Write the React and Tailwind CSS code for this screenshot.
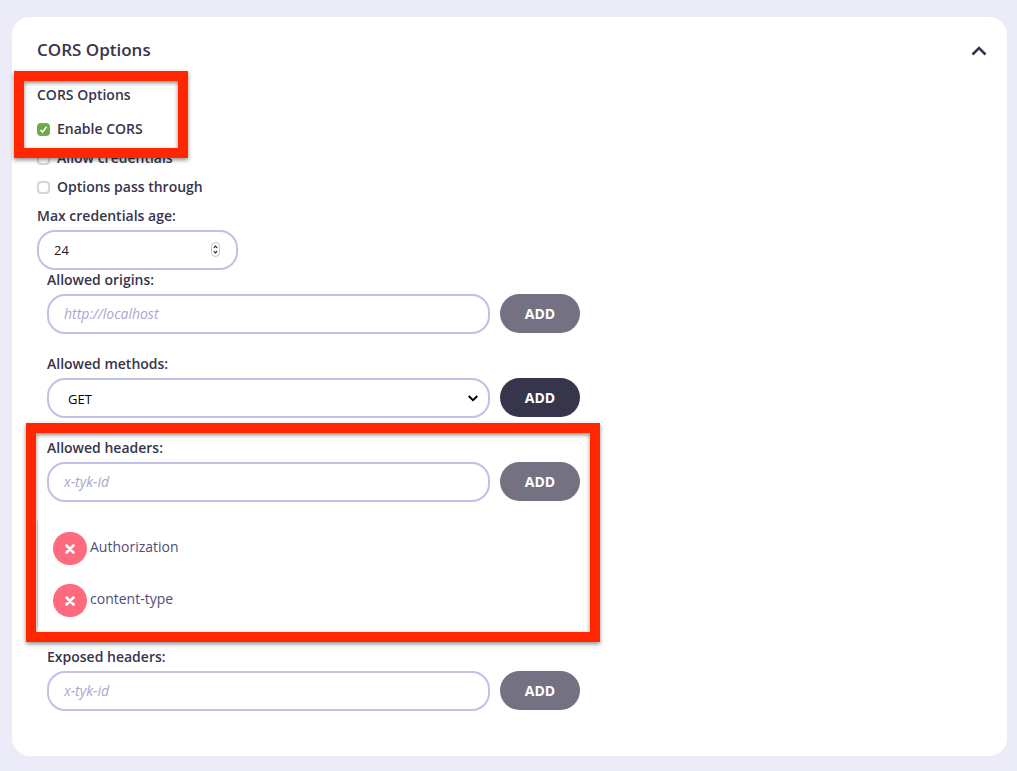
import React, { useState } from "react";

function Highlight({ className }) {
  return (
    <div
      aria-hidden="true"
      className={`pointer-events-none absolute z-10 border-10 border-[#ff2600] [filter:drop-shadow(0_2px_2px_rgba(0,0,0,0.45))] ${className}`}
    />
  );
}

function CheckRow({ id, label, defaultChecked }) {
  return (
    <div className="flex h-5 items-center gap-[7px]">
      <span className="relative flex h-[13px] w-[13px]">
        <input
          id={id}
          type="checkbox"
          defaultChecked={defaultChecked}
          className="peer h-[13px] w-[13px] appearance-none rounded-[4px] border-2 border-[#d6d6d6] bg-white checked:border-[#6fae48] checked:bg-[#6aaa43]"
        />
        <svg
          viewBox="0 0 13 13"
          className="pointer-events-none absolute inset-0 hidden h-[13px] w-[13px] peer-checked:block"
          fill="none"
          stroke="#fff"
          strokeWidth="1.6"
        >
          <path d="M3.4 7 5.6 9.1 9.6 3.8" />
        </svg>
      </span>
      <label htmlFor={id} className="font-semibold">
        {label}
      </label>
    </div>
  );
}

const fieldClass =
  "h-10 w-full rounded-[18px] border-2 border-[#c3c0e6] bg-white text-[13px] outline-none";

function Field({ id, label, active, children }) {
  return (
    <div className="px-[10px]">
      <label htmlFor={id} className="mb-1 block h-5 font-semibold">
        {label}
      </label>
      <div className="flex max-w-[533px] gap-[10px]">
        <div className="relative min-w-0 flex-1">{children}</div>
        <button
          type="button"
          className={`h-[39px] w-20 shrink-0 rounded-[20px] text-sm font-bold text-white ${
            active ? "bg-[#36354b]" : "bg-[#737182]"
          }`}
        >
          ADD
        </button>
      </div>
    </div>
  );
}

function TextField({ id, label, placeholder }) {
  return (
    <Field id={id} label={label}>
      <input
        id={id}
        type="text"
        placeholder={placeholder}
        className={`${fieldClass} px-[15px] placeholder:text-sm placeholder:text-[#aaa7d0] placeholder:italic`}
      />
    </Field>
  );
}

export default function App() {
  const [open, setOpen] = useState(true);
  const [age, setAge] = useState(24);
  const [headers, setHeaders] = useState(["Authorization", "content-type"]);

  return (
    <main className="min-h-screen bg-[#ecebf8] pt-[17px] pr-[10px] pb-[15px] pl-3 font-['Open_Sans','Noto_Sans',sans-serif] text-sm leading-5 text-[#36354b]">
      <section className="rounded-[18px] bg-white px-[25px] pt-5 pb-[45px]">
        <header className="flex h-[26px] items-center justify-between">
          <h2 className="text-[17px] leading-6 font-semibold">CORS Options</h2>
          <button
            type="button"
            aria-label="Toggle CORS options"
            aria-expanded={open}
            onClick={() => setOpen(!open)}
            className="-mr-[9px] flex h-6 w-6 items-center justify-center pt-0.5"
          >
            <svg viewBox="0 0 16 10" className="h-[10px] w-4" fill="none" stroke="#36354b" strokeWidth="2.6">
              <path d="M1.5 8.5 8 2l6.5 6.5" />
            </svg>
          </button>
        </header>

        {open && (
          <div className="pt-[22px]">
            <div className="relative mb-[9px] flex flex-col gap-[14px]">
              <h3 className="font-semibold">CORS Options</h3>
              <CheckRow id="enable-cors" label="Enable CORS" defaultChecked />
              <Highlight className="-top-[14px] -left-[23px] h-[87px] w-[174px]" />
            </div>
            <div className="flex flex-col gap-[9px]">
              <CheckRow id="allow-credentials" label="Allow credentials" />
              <CheckRow id="options-pass" label="Options pass through" />
              <div>
                <label htmlFor="max-age" className="mb-1 block h-5 font-semibold">
                  Max credentials age:
                </label>
                <div className="relative max-w-[201px]">
                  <input
                    id="max-age"
                    type="number"
                    value={age}
                    onChange={(e) => setAge(e.target.value)}
                    className={`${fieldClass} [appearance:textfield] pr-8 pl-[15px] text-[#222] [&::-webkit-inner-spin-button]:appearance-none`}
                  />
                  <svg
                    viewBox="0 0 9 15"
                    className="pointer-events-none absolute top-3 right-[18px] h-[15px] w-[9px]"
                    fill="none"
                  >
                    <rect x=".5" y=".5" width="8" height="14" rx="4" fill="#fff" stroke="#c4c4c4" />
                    <path d="M2.8 5.8 4.5 4l1.7 1.8M2.8 9.2 4.5 11l1.7-1.8" stroke="#222" strokeWidth="1.2" />
                  </svg>
                </div>
              </div>
            </div>

            <div className="flex flex-col gap-5">
              <TextField id="origins" label="Allowed origins:" placeholder="http://localhost" />

              <Field id="methods" label="Allowed methods:" active>
                <select id="methods" className={`${fieldClass} appearance-none px-[19px] pt-px text-black`}>
                  <option>GET</option>
                  <option>POST</option>
                  <option>PUT</option>
                  <option>DELETE</option>
                </select>
                <svg
                  viewBox="0 0 10 7"
                  className="pointer-events-none absolute top-[17px] right-3 h-[7px] w-[10px]"
                  fill="none"
                  stroke="#000"
                  strokeWidth="1.9"
                >
                  <path d="M.7 1 5 5.2 9.3 1" />
                </svg>
              </Field>

              <div className="relative">
                <TextField id="allowed-headers" label="Allowed headers:" placeholder="x-tyk-id" />
                <ul className="mt-[19px] flex flex-col gap-[18px] border-l border-[#d8d8dc] pt-[11px] pb-[9px] pl-[15px]">
                  {headers.map((name) => (
                    <li key={name} className="flex h-[34px] items-start gap-[3px] text-[#504e75]">
                      <button
                        type="button"
                        aria-label={`Remove ${name}`}
                        onClick={() => setHeaders(headers.filter((h) => h !== name))}
                        className="flex h-[33px] w-[34px] items-center justify-center rounded-full bg-[#ff6b7e]"
                      >
                        <svg viewBox="0 0 10 10" className="h-[10px] w-[10px]" stroke="#fff" strokeWidth="2.5" strokeLinecap="round">
                          <path d="m1.5 1.5 7 7m0-7-7 7" />
                        </svg>
                      </button>
                      <span className="pt-[5px]">{name}</span>
                    </li>
                  ))}
                </ul>
                <Highlight className="-top-[15px] -left-[11px] h-[219px] w-[574px]" />
              </div>

              <TextField id="exposed-headers" label="Exposed headers:" placeholder="x-tyk-id" />
            </div>
          </div>
        )}
      </section>
    </main>
  );
}
